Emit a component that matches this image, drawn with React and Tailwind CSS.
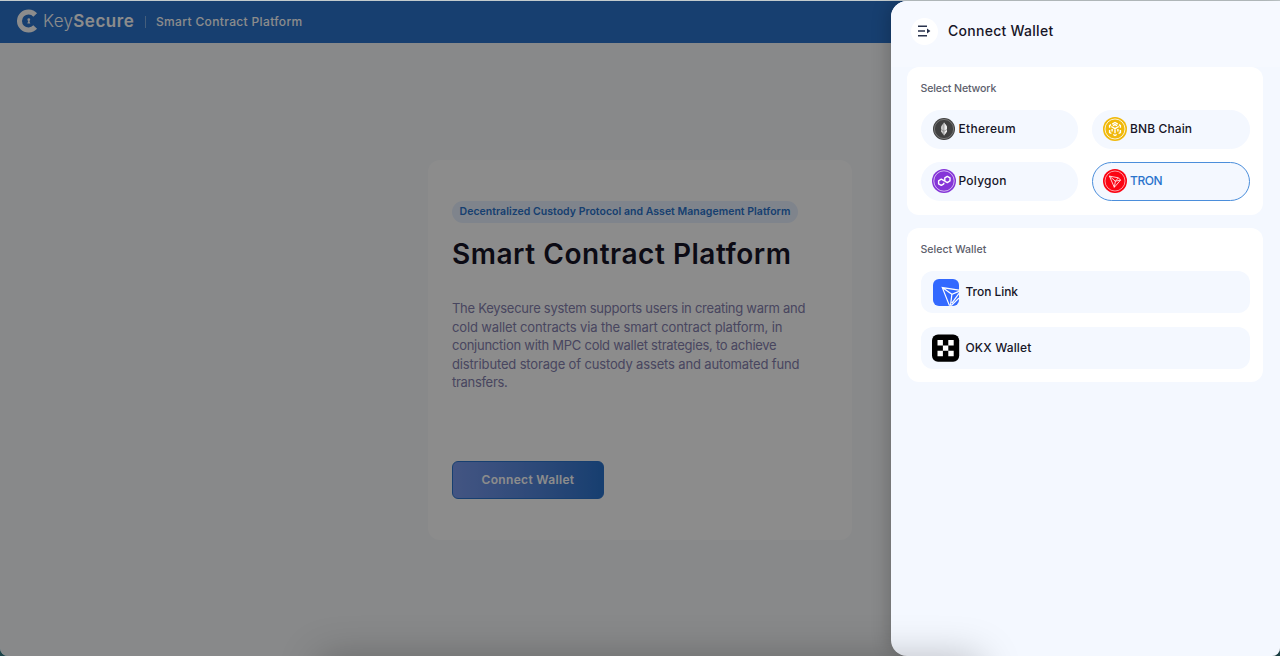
import React from "react";

function Logo() {
  return (
    <svg viewBox="0 0 21 24" className="h-6 w-[21px] shrink-0" fill="none">
      <path d="M18.2 6A9 9 0 1 0 18.2 18" stroke="#fff" strokeWidth="5" />
      <circle cx="11.8" cy="10.7" r="1.4" fill="#fff" />
      <path d="M11.8 10.6l1.5 4h-3z" fill="#fff" />
    </svg>
  );
}

function Header() {
  return (
    <header className="flex h-[42px] items-center bg-[#2a73cc] pl-[17px] text-white">
      <div className="flex -translate-y-px">
        <Logo />
      </div>
      <div className="ml-[5px] flex w-[92px] -translate-y-px items-baseline whitespace-nowrap text-[17px] leading-6">
        <span className="font-light tracking-[0.3px]">Key</span>
        <span className="font-semibold tracking-[0.55px]">Secure</span>
      </div>
      <div className="ml-[10px] h-3 w-px bg-white/40" />
      <span className="ml-[10px] whitespace-nowrap text-[12px] font-medium tracking-[0.35px]">Smart Contract Platform</span>
    </header>
  );
}

const lines = [
  { text: "The Keysecure system supports users in creating warm and", spacing: "tracking-[-0.27px]" },
  { text: "cold wallet contracts via the smart contract platform, in", spacing: "tracking-[-0.14px]" },
  { text: "conjunction with MPC cold wallet strategies, to achieve", spacing: "tracking-[-0.26px]" },
  { text: "distributed storage of custody assets and automated fund", spacing: "tracking-[-0.15px]" },
  { text: "transfers.", spacing: "tracking-[-0.3px]" },
];

function Hero() {
  return (
    <main className="flex flex-1 items-start justify-center pt-[117px]">
      <section className="flex h-[380px] w-[424px] flex-col items-start rounded-xl bg-white px-6 pt-[41px]">
        <div className="flex h-[22px] w-[346px] items-center justify-center whitespace-nowrap rounded-full bg-[#e8f1ff] text-[10.5px] font-semibold tracking-[0.03px] text-[#2a73cc]">
          Decentralized Custody Protocol and Asset Management Platform
        </div>
        <h1 className="mt-[11px] whitespace-nowrap text-[28px] font-semibold leading-[40px] tracking-[0.53px] text-[#171527]">Smart Contract Platform</h1>
        <p className="mt-[25px] whitespace-nowrap text-[13px] leading-[18.6px] text-[#8480ae]">
          {lines.map(({ text, spacing }) => (
            <span key={text} className={"block " + spacing}>{text}</span>
          ))}
        </p>
        <button className="mt-[69px] h-[38px] w-[152px] rounded-md border border-[#2a73cc] bg-linear-to-r from-[#7b9bee] to-[#2a73cc] text-[12px] font-semibold tracking-[0.33px] text-white">
          Connect Wallet
        </button>
      </section>
    </main>
  );
}

function EthereumIcon() {
  return (
    <svg viewBox="0 0 24 24" className="size-6 shrink-0">
      <circle cx="12" cy="12" r="11" fill="#414141" />
      <circle cx="12" cy="12" r="9.6" fill="none" stroke="#999" strokeWidth=".6" />
      <path d="M12 5.6L9 9.5v5L12 18.4l3-3.9v-5z" fill="#c4c4c4" />
      <path d="M12 5.6v12.8l3-3.9v-5z" fill="#ececec" />
      <path d="M9 12.4l3 1.9 3-1.9M12 5.6v12.8" stroke="#666" strokeWidth=".5" fill="none" />
    </svg>
  );
}

function BnbIcon() {
  return (
    <svg viewBox="0 0 24 24" className="size-6 shrink-0">
      <circle cx="12" cy="12" r="12" fill="#f0b90b" />
      <circle cx="12" cy="12" r="10" fill="none" stroke="#fff" strokeWidth=".8" />
      <g fill="none" stroke="#fff" strokeWidth="1.4">
        <path d="M9.2 7.1L12 5.5l2.8 1.6M6.6 10.7V8.6l1.5-.9M17.4 10.7V8.6l-1.5-.9M6.6 13v2.5l1.8 1M17.4 13v2.5l-1.8 1M10.3 17.5l1.7 1 1.7-1" />
        <path d="M8.3 9.5L12 11.7l3.7-2.2M12 11.7v4.5M9.1 12v2.5M14.9 12v2.5M10 8.7l2-1.1 2 1.1" />
      </g>
    </svg>
  );
}

function PolygonIcon() {
  return (
    <svg viewBox="0 0 24 24" className="size-6 shrink-0">
      <circle cx="12" cy="12" r="12" fill="#8535d8" />
      <circle cx="12" cy="12" r="10.2" fill="none" stroke="#fff" strokeOpacity=".8" strokeWidth=".8" />
      <path
        d="M11.8 13.7v1.1l-2.5 1.6-2.7-1.5v-3.1l2.7-1.6 2.5 1.4 1-.6V8.9l2.5-1.5L18 8.8v3.1l-2.7 1.7-2.5-1.4V11"
        fill="none"
        stroke="#fff"
        strokeWidth="1.4"
        strokeLinejoin="round"
      />
    </svg>
  );
}

function TronIcon() {
  return (
    <svg viewBox="0 0 24 24" className="size-6 shrink-0">
      <circle cx="12" cy="12" r="12" fill="#fb0413" />
      <circle cx="12" cy="12" r="10" fill="none" stroke="#fff" strokeOpacity=".85" strokeWidth=".7" />
      <path d="M6.4 7.1l9 1.7 2.2 2.3-6.3 7.2zM6.4 7.1l6 5.1 3-3.4M12.4 12.2l-1.1 6.1M12.4 12.2l5.2-1.1" fill="none" stroke="#fff" strokeWidth=".8" strokeLinejoin="round" />
    </svg>
  );
}

function TronLinkIcon() {
  return (
    <svg viewBox="0 0 28 28" className="size-7 shrink-0">
      <rect x="1" y="1" width="26" height="27" rx="6" fill="#3369ff" />
      <path d="M27 12.2L10.3 9.6l7 17.6h2.4L27 20M10.3 9.6l9.6 6.7L27 13.4M19.9 16.3l-1.4 10.9M27 15.3l-7.1 9.9" fill="none" stroke="#fff" strokeWidth="1.2" />
    </svg>
  );
}

function OkxIcon() {
  return (
    <svg viewBox="0 0 28 28" className="size-7 shrink-0">
      <rect x="0" y="0.5" width="27.2" height="27.2" rx="6" fill="#000" />
      <path d="M5.5 6h5.4v5.4H5.5zM16.3 6h5.4v5.4h-5.4zM10.9 11.4h5.4v5.4h-5.4zM5.5 16.8h5.4v5.4H5.5zM16.3 16.8h5.4v5.4h-5.4z" fill="#fff" />
    </svg>
  );
}

const networks = [
  { name: "Ethereum", Icon: EthereumIcon, spacing: "tracking-[0.3px]" },
  { name: "BNB Chain", Icon: BnbIcon, spacing: "tracking-[0.12px]" },
  { name: "Polygon", Icon: PolygonIcon, spacing: "tracking-[0.22px]" },
  { name: "TRON", Icon: TronIcon, spacing: "tracking-[-0.4px]", selected: true },
];

const wallets = [
  { name: "Tron Link", Icon: TronLinkIcon, spacing: "tracking-[-0.05px]" },
  { name: "OKX Wallet", Icon: OkxIcon, spacing: "tracking-[0.15px]" },
];

function Drawer() {
  return (
    <aside className="absolute bottom-0 right-0 top-px flex w-[389.5px] flex-col rounded-l-2xl rounded-br-lg bg-[#f4f8ff] shadow-[-2px_0_18px_rgba(0,0,0,0.22)]">
      <div className="flex h-[65.5px] items-start rounded-tl-2xl bg-[#f6f9ff] pl-5 pt-[16.5px]">
        <div className="flex size-[27px] items-center justify-center rounded-full bg-white">
          <svg viewBox="0 0 14 14" className="size-[14px]" fill="none">
            <path d="M1 2.2h9M1 7h7M1 11.8h9" stroke="#28324c" strokeWidth="1.5" />
            <path d="M10 4.6L13.4 7 10 9.4z" fill="#28324c" />
          </svg>
        </div>
        <h2 className="ml-[10.5px] whitespace-nowrap text-[14px] font-medium leading-[26px] tracking-[0.27px] text-[#171527]">Connect Wallet</h2>
      </div>
      <section className="ml-[16.5px] h-[148px] w-[356px] rounded-xl bg-white px-[13.5px] pt-[14px]">
        <h3 className="text-[10.6px] font-medium leading-4 tracking-[-0.14px] text-[#5d606c]">Select Network</h3>
        <div className="mt-[13.5px] grid grid-cols-2 gap-x-[14px] gap-y-[13px]">
          {networks.map(({ name, Icon, selected, spacing }) => (
            <button
              key={name}
              className={
                "flex h-[39px] items-center gap-[3px] whitespace-nowrap rounded-full border bg-[#f4f8ff] pb-px pl-[10px] text-[12px] font-medium " +
                spacing +
                (selected ? " border-[#4b8edb] text-[#2a73cc]" : " border-[#f4f8ff] text-[#171527]")
              }
            >
              <Icon />
              {name}
            </button>
          ))}
        </div>
      </section>
      <section className="ml-[16.5px] mt-[13.5px] h-[154px] w-[356px] rounded-xl bg-white px-[13.5px] pt-[14px]">
        <h3 className="text-[10.6px] font-medium leading-4 text-[#5d606c]">Select Wallet</h3>
        <div className="mt-[13px] flex flex-col gap-[13.5px]">
          {wallets.map(({ name, Icon, spacing }) => (
            <button key={name} className={"flex h-[42px] items-center gap-[6px] whitespace-nowrap rounded-xl bg-[#f4f8ff] pl-[11px] text-[12px] font-medium text-[#171527] " + spacing}>
              <Icon />
              {name}
            </button>
          ))}
        </div>
      </section>
    </aside>
  );
}

export default function App() {
  return (
    <div className="relative h-[656px] w-[1280px] overflow-hidden bg-[#1c4348] font-['Inter',sans-serif]">
      <div className="flex h-full flex-col overflow-hidden rounded-b-lg border-t border-[#c3cbcd] bg-[#f8fafc]">
        <Header />
        <Hero />
      </div>
      <div className="absolute inset-x-0 bottom-0 top-px rounded-b-lg bg-black/45" />
      <Drawer />
      <div className="pointer-events-none absolute left-[330px] top-[668px] h-10 w-[640px] shadow-[0_0_40px_10px_rgba(0,0,0,0.26)]" />
    </div>
  );
}
